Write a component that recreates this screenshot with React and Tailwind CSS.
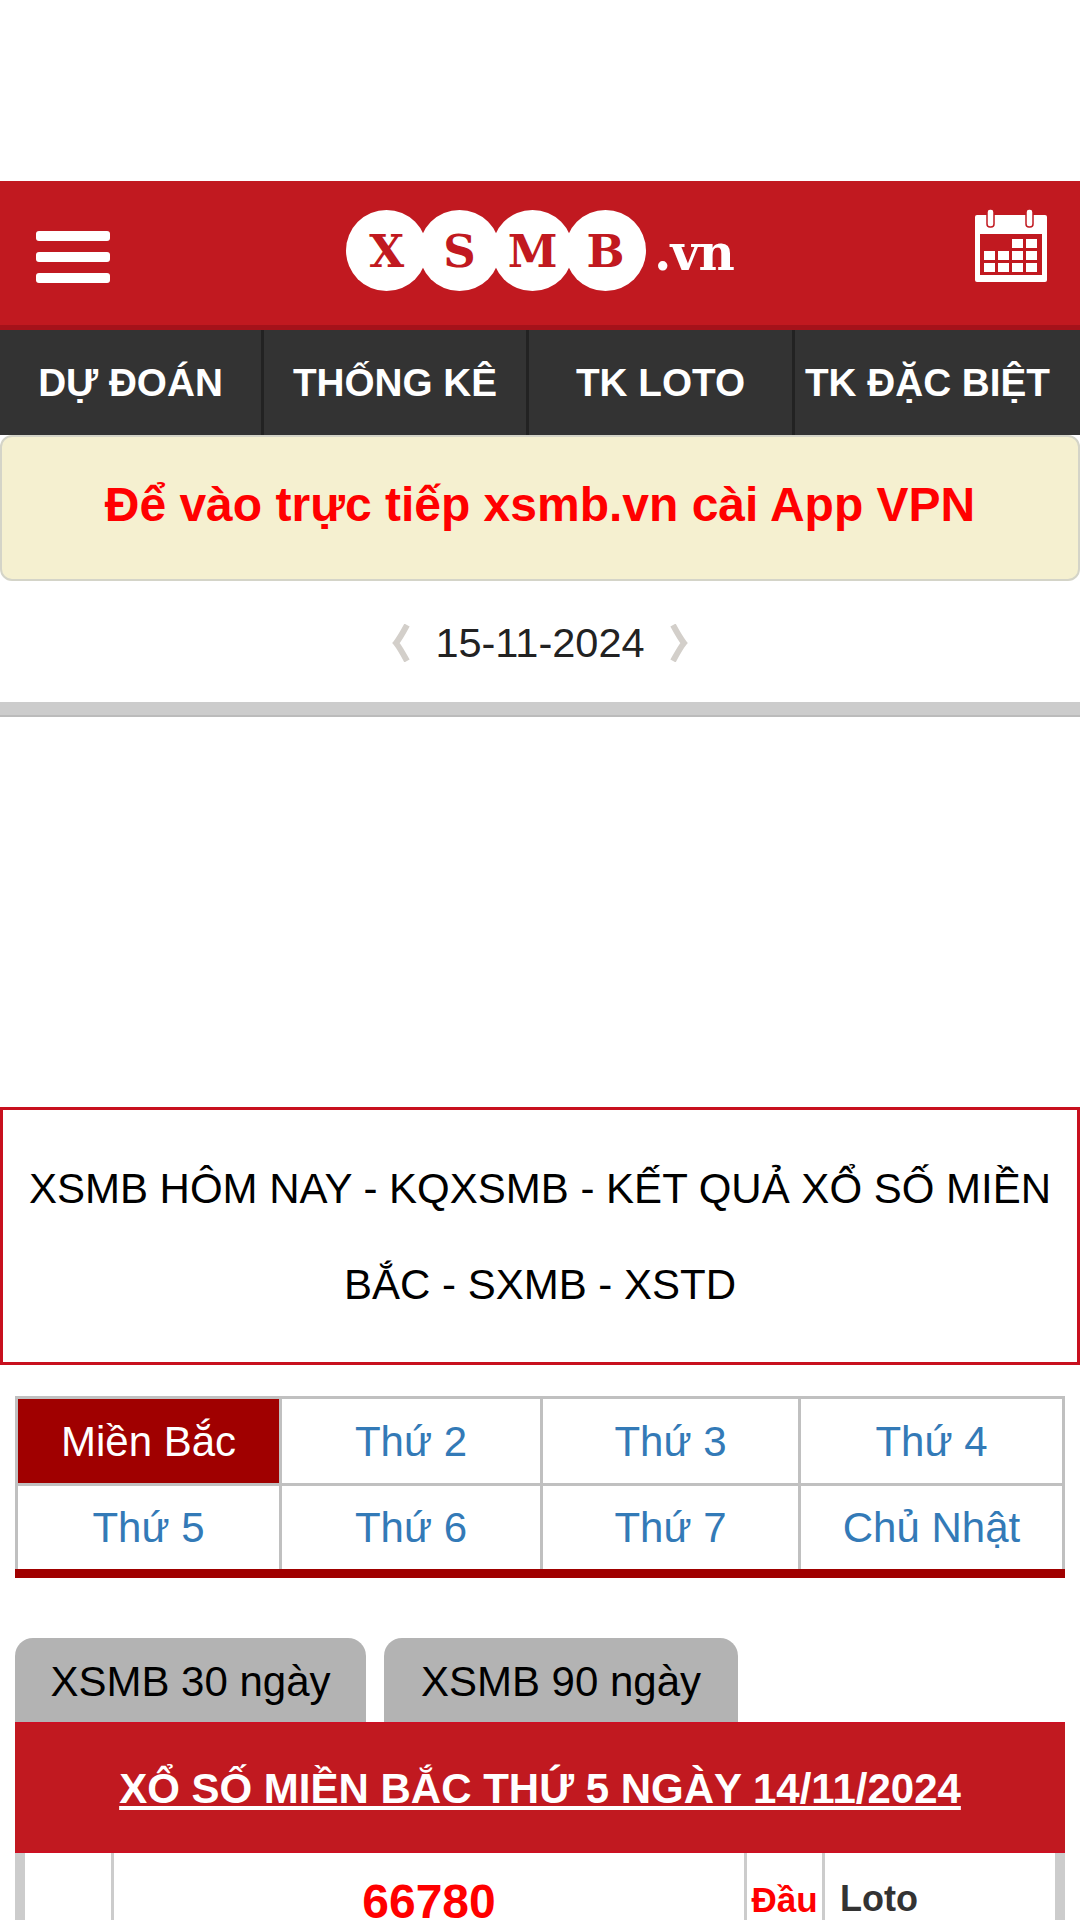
import React from 'react';

const font = { fontFamily: '"Liberation Sans", Arial, sans-serif' };

const navItems = [
  { label: 'DỰ ĐOÁN', w: 'w-[264px]' },
  { label: 'THỐNG KÊ', w: 'w-[265px]' },
  { label: 'TK LOTO', w: 'w-[266px]' },
  { label: 'TK ĐẶC BIỆT', w: 'flex-1 pr-[20px] whitespace-nowrap' },
];

const dayRows = [
  ['Miền Bắc', 'Thứ 2', 'Thứ 3', 'Thứ 4'],
  ['Thứ 5', 'Thứ 6', 'Thứ 7', 'Chủ Nhật'],
];

const dayWidths = ['w-[264px]', 'w-[261px]', 'w-[258px]', 'flex-1'];

const Logo = () => (
  <div className="flex items-center font-['DejaVu_Serif',serif] font-bold text-[#c11920]">
    {['X', 'S', 'M', 'B'].map((letter, i) => (
      <span
        key={letter}
        className={`w-[81px] h-[81px] rounded-full bg-white flex items-center justify-center text-[45px] leading-none pt-[2px] ${i > 0 ? '-ml-[8px]' : ''}`}
      >
        {letter}
      </span>
    ))}
    <span className="text-white text-[50px] leading-none ml-[8px] mt-[4px] tracking-[-1px]">.vn</span>
  </div>
);

const CalendarIcon = () => (
  <svg width="72" height="73" viewBox="0 0 72 73">
    <rect x="0" y="6" width="72" height="67" rx="2" fill="#fff" />
    <rect x="5" y="25" width="62" height="41" fill="#c11920" />
    <rect x="12" y="0" width="7" height="18" rx="3" fill="#fff" stroke="#c11920" strokeWidth="1.5" />
    <rect x="51" y="0" width="7" height="18" rx="3" fill="#fff" stroke="#c11920" strokeWidth="1.5" />
    {[9, 23, 37, 51].map((x) =>
      [42, 54].map((y) => <rect key={`${x}-${y}`} x={x} y={y} width="11" height="9" fill="#fff" />)
    )}
    {[37, 51].map((x) => <rect key={x} x={x} y="30" width="11" height="9" fill="#fff" />)}
  </svg>
);

const Chevron = ({ flip }) => (
  <svg width="20" height="38" viewBox="0 0 20 38" className={flip ? 'scale-x-[-1]' : ''}>
    <path d="M16 1 Q9 14 5 19 Q9 24 16 37" fill="none" stroke="#d3cfca" strokeWidth="6" />
  </svg>
);

export default function App() {
  return (
    <div style={font} className="w-[1080px] h-[1920px] overflow-hidden bg-white">
      <div className="h-[181px]" />

      {/* Header */}
      <header className="h-[149px] bg-[#c11920] border-b-[5px] border-[#a5121a] relative flex items-center justify-center">
        <div className="absolute left-[36px] top-[50px] w-[74px] flex flex-col gap-[11px]">
          <span className="h-[10px] rounded-[3px] bg-white" />
          <span className="h-[10px] rounded-[3px] bg-white" />
          <span className="h-[10px] rounded-[3px] bg-white" />
        </div>
        <div className="-mt-[5px]">
          <Logo />
        </div>
        <div className="absolute left-[975px] top-[28px]">
          <CalendarIcon />
        </div>
      </header>

      {/* Nav */}
      <nav className="h-[105px] bg-[#333333] flex">
        {navItems.map((item, i) => (
          <div
            key={item.label}
            className={`${item.w} flex items-center justify-center text-white font-bold text-[38.7px] pt-[2px] ${i < 3 ? 'border-r-[3px] border-[#222222]' : ''}`}
          >
            {item.label}
          </div>
        ))}
      </nav>

      {/* Notice */}
      <div className="h-[146px] bg-[#f5f0d0] border-[2px] border-[#d4d4c8] rounded-[12px] flex items-center justify-center text-[#ff0000] font-bold text-[48px] pb-[6px]">
        Để vào trực tiếp xsmb.vn cài App VPN
      </div>

      {/* Date */}
      <div className="h-[121px] flex items-center justify-center gap-[24px] text-[#222222] text-[41.5px] pt-[3px]">
        <Chevron />
        <span>15-11-2024</span>
        <Chevron flip />
      </div>
      <div className="h-[15px] bg-[#cccccc] border-b-[2px] border-[#bbbbbb]" />

      <div className="h-[390px]" />

      {/* Title */}
      <h1 className="h-[258px] border-[3px] border-[#c8101e] px-[20px] pt-[1px] flex items-center justify-center text-center text-black text-[42px] leading-[96px] font-normal">
        XSMB HÔM NAY - KQXSMB - KẾT QUẢ XỔ SỐ MIỀN BẮC - SXMB - XSTD
      </h1>

      {/* Day tabs */}
      <div className="mx-[15px] mt-[31px] border-[3px] border-b-0 border-[#c0c0c0]">
        {dayRows.map((row, r) => (
          <div key={r} className={`flex ${r > 0 ? 'h-[86px] border-t-[3px] border-[#c0c0c0]' : 'h-[84px]'}`}>
            {row.map((day, c) => (
              <div
                key={day}
                className={`${dayWidths[c]} flex items-center justify-center text-[42px] ${c < 3 ? 'border-r-[3px] border-[#c0c0c0]' : ''} ${day === 'Miền Bắc' ? 'bg-[#a00000] text-white' : 'text-[#337ab7]'}`}
              >
                {day}
              </div>
            ))}
          </div>
        ))}
      </div>
      <div className="mx-[15px] h-[9px] bg-[#a00000]" />

      {/* 30/90 tabs */}
      <div className="mx-[15px] mt-[60px] flex gap-[18px]">
        <div className="w-[351px] h-[84px] bg-[#b3b3b3] rounded-t-[18px] flex items-center justify-center text-black text-[42px] pt-[2px]">
          XSMB 30 ngày
        </div>
        <div className="w-[354px] h-[84px] bg-[#b3b3b3] rounded-t-[18px] flex items-center justify-center text-black text-[42px] pt-[2px]">
          XSMB 90 ngày
        </div>
      </div>

      {/* Result */}
      <div className="mx-[15px]">
        <div className="h-[131px] bg-[#c11920] border-y-[2px] border-[#cc1022] pt-[2px] flex items-center justify-center text-white font-bold text-[42px] underline">
          XỔ SỐ MIỀN BẮC THỨ 5 NGÀY 14/11/2024
        </div>
        <div className="flex h-[70px] border-x-[10px] border-[#cccccc]">
          <div className="w-[89px] border-r-[3px] border-[#cccccc]" />
          <div className="w-[633px] border-r-[3px] border-[#cccccc] flex justify-center pt-[25px] text-[#ff0000] font-bold text-[48px] leading-none">
            66780
          </div>
          <div className="w-[78px] border-r-[3px] border-[#cccccc] flex justify-center pt-[29px] text-[#ff0000] font-bold text-[35px] leading-none">
            Đầu
          </div>
          <div className="flex-1 pl-[15px] pt-[28px] text-[#333333] font-bold text-[36px] leading-none">
            Loto
          </div>
        </div>
      </div>
    </div>
  );
}
